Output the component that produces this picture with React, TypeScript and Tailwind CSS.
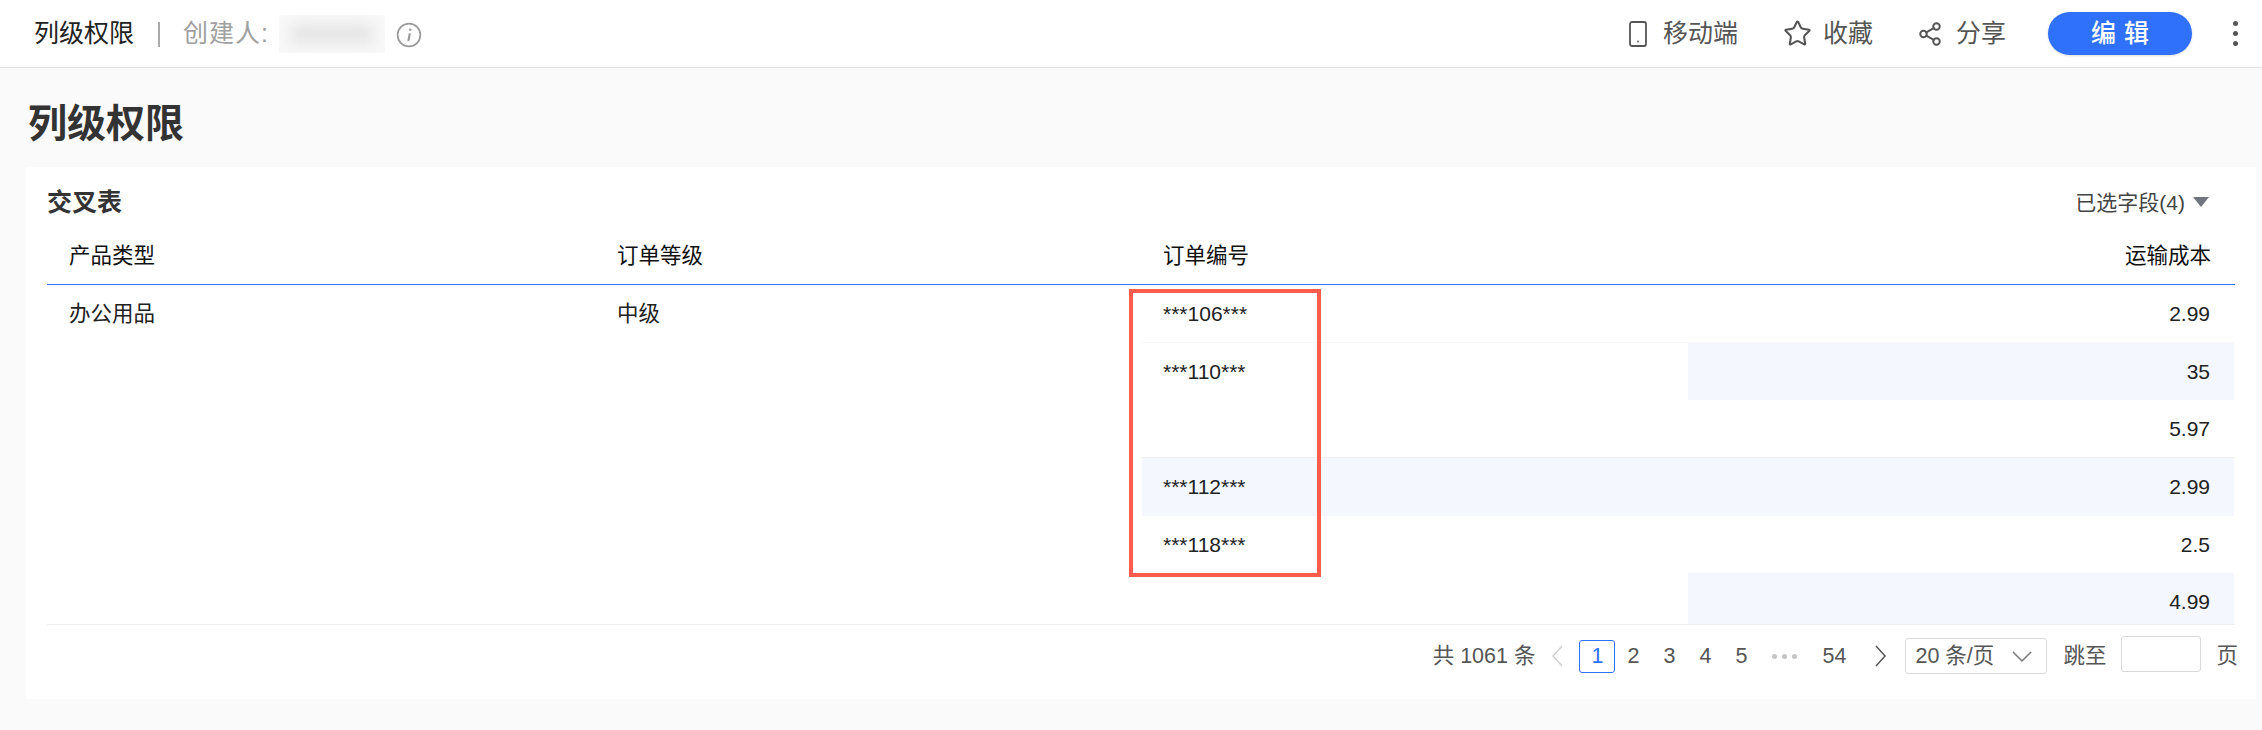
import { Star, Share2 } from 'lucide-react'

const rows = [
  { a: '办公用品', b: '中级', id: '***106***', cost: '2.99', idBg: false, costBg: false, line: 'border-b border-[#f8f8f8]' },
  { a: '', b: '', id: '***110***', cost: '35', idBg: false, costBg: true, line: '' },
  { a: '', b: '', id: '', cost: '5.97', idBg: false, costBg: false, line: 'border-b border-[#eeeeee]' },
  { a: '', b: '', id: '***112***', cost: '2.99', idBg: true, costBg: true, line: '' },
  { a: '', b: '', id: '***118***', cost: '2.5', idBg: false, costBg: false, line: '' },
  { a: '', b: '', id: '', cost: '4.99', idBg: false, costBg: true, line: '' },
]

function HeaderAction({ icon, label, className }: { icon: React.ReactNode; label: string; className: string }) {
  return (
    <div className={`flex items-center ${className}`}>
      {icon}
      <span className="text-[25px] leading-none text-[#555]">{label}</span>
    </div>
  )
}

function Chevron({ dir, color }: { dir: 'left' | 'right' | 'down'; color: string }) {
  const pts = dir === 'left' ? '12,1 3,11 12,21' : dir === 'right' ? '3,1 12,11 3,21' : '1,2 10,11 19,2'
  const box = dir === 'down' ? '0 0 20 13' : '0 0 15 22'
  return (
    <svg viewBox={box} className={dir === 'down' ? 'w-[20px] h-[13px]' : 'w-[15px] h-[22px]'} fill="none" stroke={color} strokeWidth="1.5">
      <polyline points={pts} />
    </svg>
  )
}

export default function App() {
  return (
    <div className='relative w-[2262px] h-[730px] overflow-hidden bg-[#fafafa] font-["Liberation_Sans","Noto_Sans_CJK_SC",sans-serif]'>
      <header className="h-[68px] bg-white border-b border-[#e2e2e2] flex items-center pl-[34px]">
        <span className="text-[25px] leading-none text-[#222]">列级权限</span>
        <div className="w-[2px] h-[25px] bg-[#aaa] ml-[24px] mt-[2px]" />
        <span className="ml-[23px] text-[25px] leading-none text-[#a0a0a0] tracking-[1px]">创建人:</span>
        <div className="ml-[10px] w-[106px] h-[38px] bg-[#f8f8f8] overflow-hidden flex items-center justify-center">
          <div className="w-[80px] h-[18px] bg-[#e4e4e4] blur-[7px]" />
        </div>
        <svg viewBox="0 0 24 24" className="ml-[11px] mt-[2px] w-[26px] h-[26px]" fill="none" stroke="#999" strokeWidth="1.6">
          <circle cx="12" cy="12" r="10.5" />
          <path d="M12.8 10.5 L11.4 17.5" strokeWidth="2" />
          <circle cx="13.2" cy="7.2" r="1.1" fill="#999" stroke="none" />
        </svg>
        <div className="ml-auto flex items-center">
          <HeaderAction
            className="gap-[16px]"
            label="移动端"
            icon={
              <svg viewBox="0 0 18 26" className="w-[18px] h-[26px]" fill="none" stroke="#555" strokeWidth="1.8">
                <rect x="1" y="1" width="16" height="24" rx="2" />
                <circle cx="9" cy="20.5" r="0.9" fill="#555" stroke="none" />
              </svg>
            }
          />
          <HeaderAction
            className="gap-[11px] ml-[45px]"
            label="收藏"
            icon={<Star className="w-[29px] h-[29px] text-[#555]" strokeWidth={1.7} />}
          />
          <HeaderAction
            className="gap-[13px] ml-[44px]"
            label="分享"
            icon={<Share2 className="w-[26px] h-[26px] text-[#555]" strokeWidth={1.8} />}
          />
          <button className="ml-[42px] w-[144px] h-[43px] rounded-full bg-[#2f71fb] text-white text-[25px] leading-none tracking-[8px] pl-[8px] shadow-sm font-medium">
            编辑
          </button>
          <div className="ml-[41px] mr-[24px] flex flex-col gap-[5px]">
            <div className="w-[5px] h-[5px] rounded-full bg-[#555]" />
            <div className="w-[5px] h-[5px] rounded-full bg-[#555]" />
            <div className="w-[5px] h-[5px] rounded-full bg-[#555]" />
          </div>
        </div>
      </header>

      <div className="h-[99px] pl-[28px] pt-[33px]">
        <h1 className="text-[39px] leading-[46px] font-bold text-[#333]">列级权限</h1>
      </div>

      <section className="h-[532px] ml-[26px] mr-[6px] px-[21px] bg-white">
        <div className="h-[70px] flex items-center justify-between">
          <span className="text-[25px] font-bold leading-none text-[#333]">交叉表</span>
          <div className="flex items-center gap-[8px] mr-[26px]">
            <span className="text-[21px] leading-none text-[#444]">已选字段(4)</span>
            <div className="w-0 h-0 border-x-[8px] border-x-transparent border-t-[10px] border-t-[#70757f]" />
          </div>
        </div>

        <div className="grid grid-cols-[549px_546px_546px_546px] h-[48px] pb-[8px] items-center border-b border-[#2f71fb] text-[21.5px] leading-none text-[#111]">
          <div className="pl-[22px]">产品类型</div>
          <div className="pl-[21px]">订单等级</div>
          <div className="pl-[21px]">订单编号</div>
          <div className="pr-[23px] text-right">运输成本</div>
        </div>

        <div className="border-b border-[#eeeeee]">
          {rows.map((r, i) => (
            <div
              key={i}
              className={`grid grid-cols-[549px_546px_546px_546px] ${i === 5 ? 'h-[51px]' : 'h-[57.7px]'} text-[21.5px] leading-[30px] text-[#222]`}
            >
              <div className="pl-[22px] pt-[14px]">{r.a}</div>
              <div className="pl-[21px] pt-[14px]">{r.b}</div>
              <div className={`pl-[21px] pt-[14px] text-[21px] ${r.idBg ? 'bg-[#f4f7fe]' : ''} ${r.line}`}>{r.id}</div>
              <div className={`pr-[24px] pt-[14px] text-[21px] text-right ${r.costBg ? 'bg-[#f4f7fe]' : ''} ${r.line}`}>{r.cost}</div>
            </div>
          ))}
        </div>

        <div className="flex items-center h-[62px] text-[21.5px] leading-none text-[#555]">
          <span className="ml-auto">共 1061 条</span>
          <div className="ml-[15px]">
            <Chevron dir="left" color="#cfcfcf" />
          </div>
          <div className="ml-[14px] w-[36px] h-[33px] rounded-[3px] border border-[#2f71fb] text-[#2f71fb] flex items-center justify-center">1</div>
          <div className="w-[36px] text-center">2</div>
          <div className="w-[36px] text-center">3</div>
          <div className="w-[36px] text-center">4</div>
          <div className="w-[36px] text-center">5</div>
          <div className="w-[50px] flex justify-center gap-[5px]">
            <div className="w-[5px] h-[5px] rounded-full bg-[#c4c4c4]" />
            <div className="w-[5px] h-[5px] rounded-full bg-[#c4c4c4]" />
            <div className="w-[5px] h-[5px] rounded-full bg-[#c4c4c4]" />
          </div>
          <div className="ml-[7px] w-[36px] text-center">54</div>
          <div className="ml-[21px]">
            <Chevron dir="right" color="#555" />
          </div>
          <div className="ml-[17px] w-[142px] h-[36px] rounded-[3px] border border-[#d9d9d9] flex items-center justify-between pl-[9px] pr-[14px]">
            <span>20 条/页</span>
            <Chevron dir="down" color="#777" />
          </div>
          <span className="ml-[16px]">跳至</span>
          <div className="ml-[15px] w-[80px] h-[36px] -mt-[4px] rounded-[3px] border border-[#d9d9d9]" />
          <span className="ml-[15px] -mr-[3px]">页</span>
        </div>
      </section>

      {/* red annotation drawn over the table */}
      <div className="absolute left-[1129px] top-[289px] w-[192px] h-[288px] border-[4px] border-[#fb5c4c]" />
    </div>
  )
}
